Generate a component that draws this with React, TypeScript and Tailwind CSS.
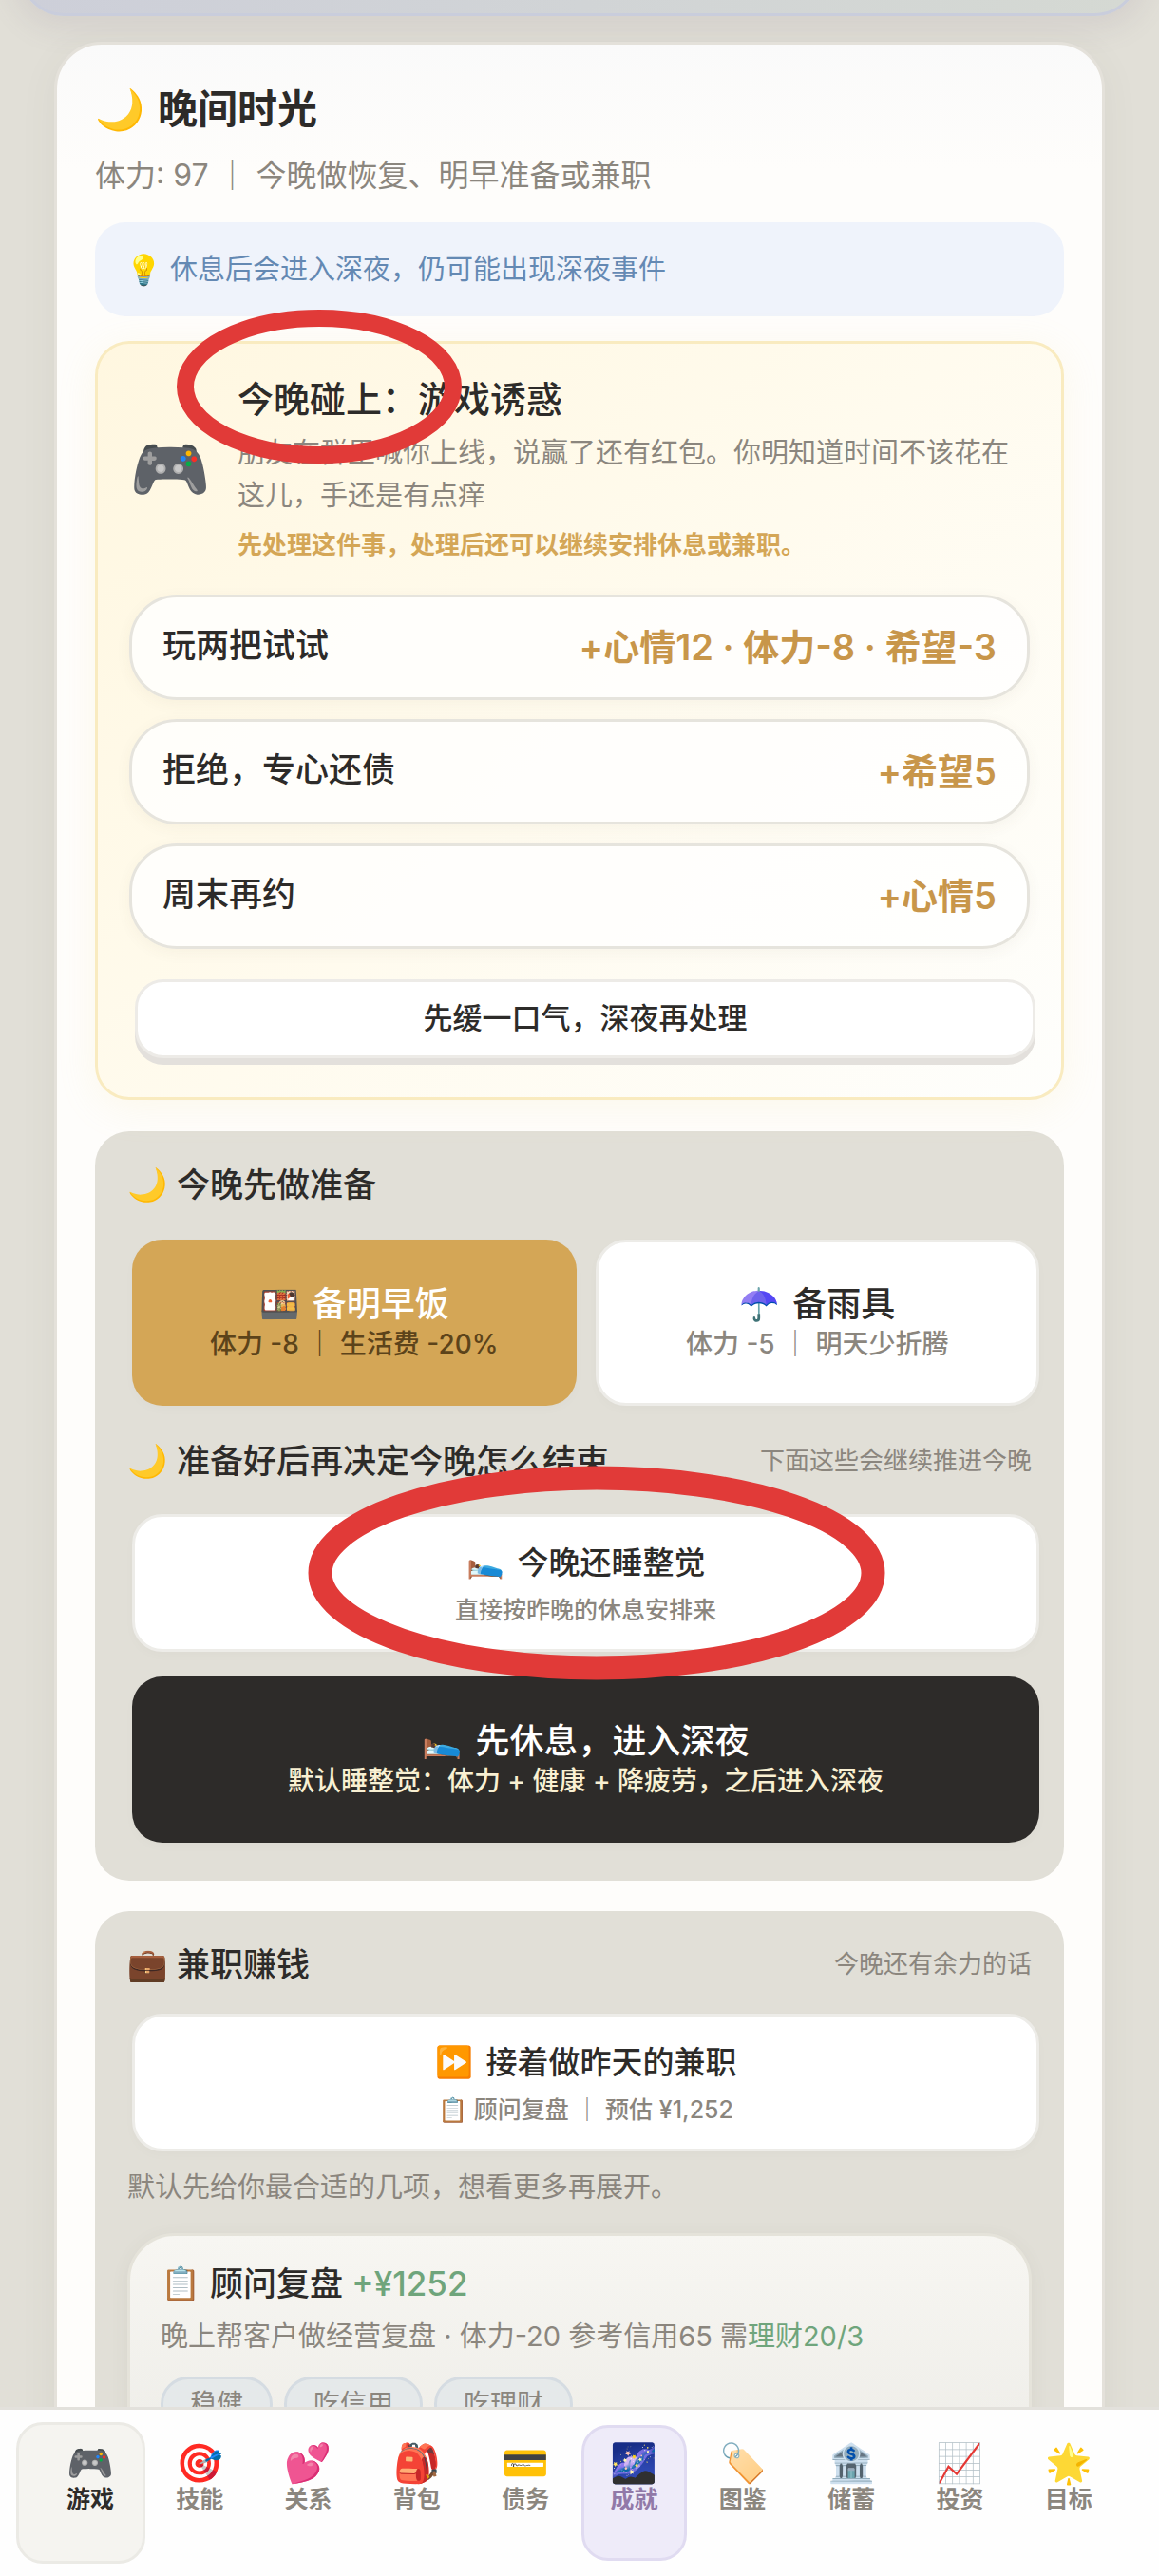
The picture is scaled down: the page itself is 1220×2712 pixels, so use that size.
import type { ReactNode } from "react";
import clsx from "clsx";

const choices = [
  { label: "玩两把试试", effect: "+心情12 · 体力-8 · 希望-3" },
  { label: "拒绝，专心还债", effect: "+希望5" },
  { label: "周末再约", effect: "+心情5" },
];

const tabs = [
  { icon: "🎮", label: "游戏" },
  { icon: "🎯", label: "技能" },
  { icon: "💕", label: "关系" },
  { icon: "🎒", label: "背包" },
  { icon: "💳", label: "债务" },
  { icon: "🌌", label: "成就" },
  { icon: "🏷️", label: "图鉴" },
  { icon: "🏦", label: "储蓄" },
  { icon: "📈", label: "投资" },
  { icon: "🌟", label: "目标" },
];

const SectionTitle = ({ icon, title, note }: { icon: string; title: string; note?: string }) => (
  <div className="flex items-center justify-between">
    <h2 className="flex items-center gap-2.5 text-[35px] leading-12 font-medium text-[#2d2b29]">
      <span className="text-[34px]">{icon}</span>
      {title}
    </h2>
    {note && <span className="text-[26px] leading-12 text-[#8b867e]">{note}</span>}
  </div>
);

const buttonTones = {
  gold: "bg-[#d4a656] text-white",
  dark: "bg-[#2d2b29] text-white",
  light: "border-3 border-[#edece8] bg-white text-[#2d2b29]",
};

const subTones = {
  gold: "text-[#5c431a]",
  dark: "text-[#f9f0d2]",
  light: "text-[#8b867e]",
};

type BigButtonProps = { tone: keyof typeof buttonTones; icon: string; title: string; sub: string };

const BigButton = ({ tone, icon, title, sub }: BigButtonProps) => (
  <button
    className={clsx(
      "flex h-[175px] w-full flex-col items-center justify-center rounded-[32px] font-medium shadow-[0_4px_12px_rgba(0,0,0,0.02)]",
      buttonTones[tone],
    )}
  >
    <span className="flex items-center gap-3.5 text-[36px] leading-11">
      <span className="text-[34px]">{icon}</span>
      {title}
    </span>
    <span className={clsx("text-[28px] leading-10", subTones[tone])}>{sub}</span>
  </button>
);

const QuickButton = ({ icon, title, children }: { icon: string; title: string; children: ReactNode }) => (
  <button className="flex h-[145px] w-full flex-col items-center justify-center gap-2 rounded-[32px] border-3 border-[#edece8] bg-white font-medium shadow-[0_4px_12px_rgba(0,0,0,0.02)]">
    <span className="flex items-center gap-3.5 text-[33px] leading-12 text-[#2d2b29]">
      <span className="text-[32px]">{icon}</span>
      {title}
    </span>
    <span className="text-[25px] leading-9 text-[#8b867e]">{children}</span>
  </button>
);

const App = () => {
  return (
    <div className="flex h-screen flex-col overflow-hidden bg-[#e1dfd7] font-[Inter,'Noto_Sans_CJK_SC',sans-serif]">
      <main className="min-h-0 flex-1 overflow-hidden">
        {/* Tail of the previous card */}
        <div className="mx-5 -mt-10 h-[57px] rounded-b-[48px] border-3 border-[#c9cddc] bg-linear-to-r from-[#cdcfd9] to-[#d5d9d3] shadow-[0_6px_30px_8px_rgba(120,110,130,0.12)]" />

        <div className="relative mx-[57px] mt-[27px] rounded-[50px] border-3 border-[#e4e1da] bg-linear-to-b from-[#fafafa] via-[#fefdfb] via-5% to-[#fefdfb] px-10 pt-10 pb-10 shadow-[0_8px_40px_rgba(90,80,60,0.06)]">
          <h1 className="flex items-center gap-3.5 text-[42px] leading-14 font-bold text-[#2d2b29]">
            <span className="text-[42px]">🌙</span>
            晚间时光
          </h1>
          <p className="mt-5 text-[32px] leading-11 text-[#8b867e]">体力: 97 ｜ 今晚做恢复、明早准备或兼职</p>

          <div className="mt-[27px] flex items-center gap-2 rounded-[32px] bg-[#eff3fb] px-8 py-7 text-[29px] leading-[43px] text-[#6489b3]">
            <span className="text-[31px]">💡</span>
            休息后会进入深夜，仍可能出现深夜事件
          </div>

          {/* Tonight's event */}
          <section className="relative mt-[26px] rounded-[36px] border-3 border-[#f9ebc0] bg-linear-135 from-[#fff7e0] via-[#fffbee] to-[#fefefc] px-[33px] pt-8 pb-[41px] shadow-[0_8px_40px_rgba(240,220,140,0.14)]">
            <div className="flex items-center gap-7">
              <span className="shrink-0 text-[69px] leading-none">🎮</span>
              <div className="flex-1">
                <h2 className="text-[38px] leading-[52px] font-medium text-[#2d2b29]">今晚碰上：游戏诱惑</h2>
                <p className="mt-2 text-[29px] leading-[45px] text-[#8b867e]">
                  朋友在群里喊你上线，说赢了还有红包。你明知道时间不该花在这儿，手还是有点痒
                </p>
                <p className="mt-3 text-[26px] leading-9 font-semibold text-[#d4a656]">
                  先处理这件事，处理后还可以继续安排休息或兼职。
                </p>
              </div>
            </div>

            <div className="mt-[34px] flex flex-col gap-5">
              {choices.map((choice) => (
                <button
                  key={choice.label}
                  className="flex h-[111px] items-center justify-between rounded-[50px] border-3 border-[#e6e4dd] bg-white/80 px-8 shadow-[0_4px_16px_rgba(90,80,60,0.05)]"
                >
                  <span className="pb-1 text-[35px] font-medium text-[#2d2b29]">{choice.label}</span>
                  <span className="text-[38px] font-semibold text-[#c8964a]">{choice.effect}</span>
                </button>
              ))}
            </div>

            <button className="mt-8 ml-1.5 h-[83px] w-full rounded-[30px] border-3 border-[#edebe7] bg-white text-[31px] font-medium text-[#2d2b29] shadow-[0_7px_0_#e3e0dc]">
              先缓一口气，深夜再处理
            </button>

            <svg className="pointer-events-none absolute -top-[37px] left-[81px] z-10 h-[164px] w-[304px]" viewBox="0 0 304 164">
              <ellipse cx="152" cy="82" rx="141" ry="72" fill="none" stroke="#e13a38" strokeWidth="18" />
            </svg>
          </section>

          {/* Preparation */}
          <section className="mt-[33px] rounded-[36px] bg-[#e1dfd7] px-[34px] pt-8 pb-10">
            <SectionTitle icon="🌙" title="今晚先做准备" />
            <div className="mt-[34px] -mr-2 ml-[5px] grid grid-cols-2 gap-5">
              <BigButton tone="gold" icon="🍱" title="备明早饭" sub="体力 -8 ｜ 生活费 -20%" />
              <BigButton tone="light" icon="☂️" title="备雨具" sub="体力 -5 ｜ 明天少折腾" />
            </div>

            <div className="mt-[34px]">
              <SectionTitle icon="🌙" title="准备好后再决定今晚怎么结束" note="下面这些会继续推进今晚" />
            </div>
            <div className="relative mt-8 -mr-2 ml-[5px] flex flex-col gap-[26px]">
              <QuickButton icon="🛌" title="今晚还睡整觉">
                直接按昨晚的休息安排来
              </QuickButton>
              <BigButton tone="dark" icon="🛌" title="先休息，进入深夜" sub="默认睡整觉：体力 + 健康 + 降疲劳，之后进入深夜" />
              <svg className="pointer-events-none absolute -top-[51px] left-[185px] z-10 h-[226px] w-[608px]" viewBox="0 0 608 226">
                <ellipse cx="304" cy="113" rx="291" ry="100" fill="none" stroke="#e13a38" strokeWidth="25" />
              </svg>
            </div>
          </section>

          {/* Side jobs */}
          <section className="mt-8 rounded-[36px] bg-[#e1dfd7] px-[34px] pt-8 pb-10">
            <SectionTitle icon="💼" title="兼职赚钱" note="今晚还有余力的话" />
            <div className="mt-7 -mr-2 ml-[5px]">
              <QuickButton icon="⏩" title="接着做昨天的兼职">
                📋 顾问复盘 ｜ 预估 ¥1,252
              </QuickButton>
            </div>
            <p className="mt-4 text-[29px] leading-11 text-[#8b867e]">默认先给你最合适的几项，想看更多再展开。</p>

            <article className="mt-[26px] rounded-[50px] border-3 border-[#e5e3da] bg-linear-to-b from-[#f7f6f2] to-[#eeede8] px-8 pt-[26px] pb-8 shadow-[0_4px_20px_rgba(90,80,60,0.06)]">
              <h3 className="flex items-center gap-2.5 text-[35px] leading-12 font-medium text-[#2d2b29]">
                <span className="text-[34px]">📋</span>
                <span>
                  顾问复盘 <span className="text-[#6fa57c]">+¥1252</span>
                </span>
              </h3>
              <p className="mt-3 text-[29px] leading-10 text-[#8b867e]">
                晚上帮客户做经营复盘 · 体力-20 参考信用65 需<span className="text-[#6fa57c]">理财20/3</span>
              </p>
              <ul className="mt-[22px] flex gap-3 text-[28px] leading-[52px] text-[#8b867e]">
                {["稳健", "吃信用", "吃理财"].map((tag) => (
                  <li key={tag} className="rounded-full border-3 border-[#d5dce2] bg-[#e5e9ea] px-7">
                    {tag}
                  </li>
                ))}
              </ul>
            </article>
          </section>
        </div>
      </main>

      <nav className="relative z-20 flex h-[178px] shrink-0 items-center border-t-3 border-[#e3e1dc] bg-[#fefefe] pr-[38px] pl-[17px]">
        {tabs.map((tab, index) => (
          <button
            key={tab.label}
            className={clsx(
              "flex flex-col items-center gap-0.5 rounded-[28px] border-3 text-[25px] font-bold",
              index === 0 && "h-[149px] w-[136px] border-[#ebeae5] bg-[#f5f4f0] pt-5 pl-5 text-[#2d2b29]",
              index === 5 && "mx-0.5 h-[143px] flex-1 border-[#e0dbf1] bg-[#eeebf9] pt-[17px] text-[#9179a8]",
              index !== 0 && index !== 5 && "mx-0.5 h-[143px] flex-1 border-transparent pt-[17px] text-[#8b867e]",
            )}
          >
            <span className="text-[40px] leading-10 font-normal">{tab.icon}</span>
            <span className="leading-8">{tab.label}</span>
          </button>
        ))}
      </nav>
    </div>
  );
};

export default App;
